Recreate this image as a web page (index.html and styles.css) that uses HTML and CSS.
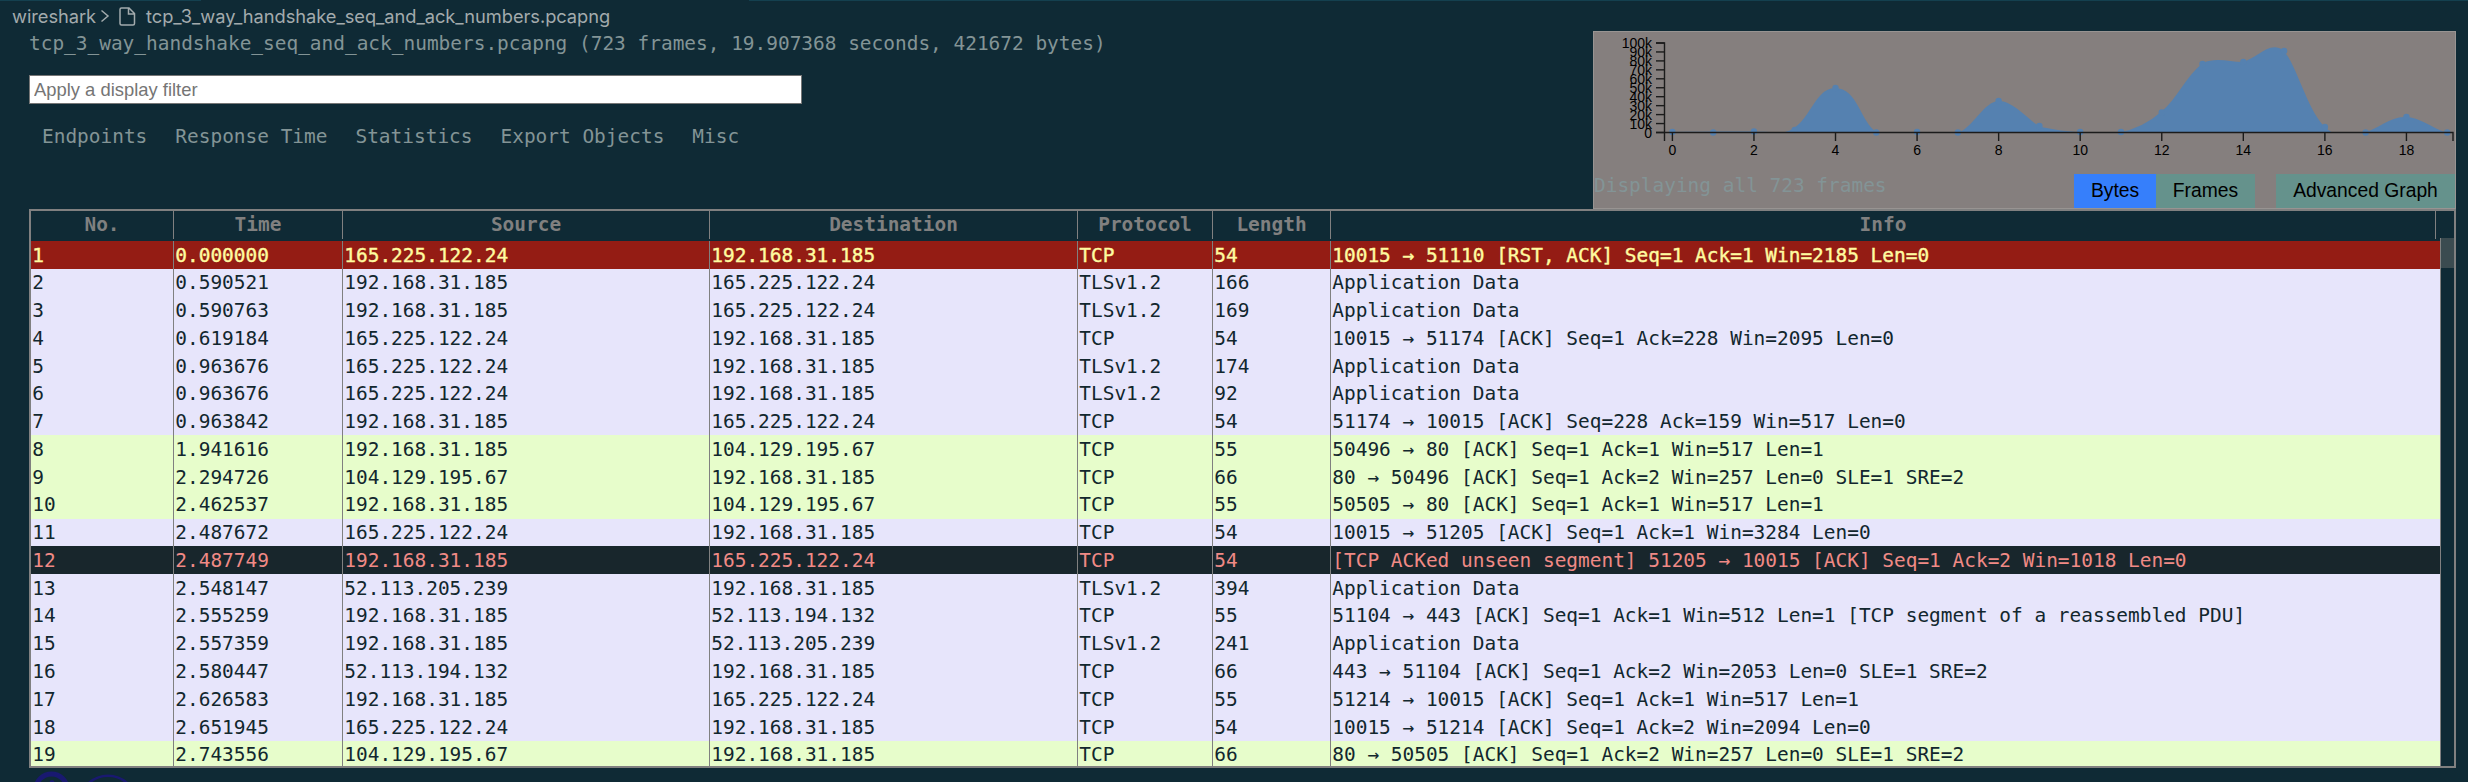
FILE: index.html
```html
<!DOCTYPE html>
<html lang="en">
<head>
<meta charset="utf-8">
<title>tcp_3_way_handshake_seq_and_ack_numbers.pcapng</title>
<link rel="stylesheet" href="styles.css">
</head>
<body>
<div class="topline"></div>
<nav class="crumbs"><span class="folder">wireshark</span>
<svg class="chev" width="10" height="14" viewBox="0 0 10 14"><path d="M1.500 1.500L8 7l-6.500 5.500"/></svg>
<svg class="file" width="17" height="19" viewBox="0 0 17 19"><path d="M2.500 1h7.500l5.500 5.500v10q0 1.500-1.500 1.500h-11.500q-1.500 0-1.500-1.500V2.500q0-1.500 1.500-1.500zM9.500 1v6h6"/></svg>
<span>tcp_3_way_handshake_seq_and_ack_numbers.pcapng</span></nav>
<main class="viewer">
<header class="head">
<section class="controls">
<div class="summary">tcp_3_way_handshake_seq_and_ack_numbers.pcapng (723 frames, 19.907368 seconds, 421672 bytes)</div>
<input class="filter" type="text" placeholder="Apply a display filter">
<div class="menu"><span>Endpoints</span><span>Response Time</span><span>Statistics</span><span>Export Objects</span><span>Misc</span></div>
</section>
<section class="graph">
<svg class="plot" width="861" height="142" viewBox="1594 32 861 142" id="plot"></svg>
<div class="graphbar"><span class="count">Displaying all 723 frames</span><button class="btn bytes">Bytes</button><button class="btn frames">Frames</button><button class="btn adv">Advanced Graph</button></div>
</section>
</header>
<section class="table">
<div class="row th"><span>No.</span><span>Time</span><span>Source</span><span>Destination</span><span>Protocol</span><span>Length</span><span>Info</span></div>
<div class="scroll"><div class="rows" id="rows"></div><div class="bar"><div class="thumb"></div></div></div>
</section>
<svg class="below" width="160" height="14" viewBox="29 768 160 14"><circle cx="51.500" cy="789.700" r="15.700" stroke-width="5"/><circle cx="108" cy="804.500" r="28.700" stroke-width="2.600"/><path d="M50 782l2-1 2 1" stroke-width="2"/></svg>
</main>
<script src="app.js"></script>
</body>
</html>
```
FILE: styles.css
```css
* { box-sizing: border-box; }
body {
  margin: 0;
  width: 2468px;
  height: 782px;
  overflow: hidden;
  background: #0f2a35;
  color: #839496;
  font: 19.44px/27.77px "DejaVu Sans Mono", monospace;
}
.topline { height: 1px; background: linear-gradient(90deg, #14404f 201px, #0f2a35 201px 749px, #14404f 749px); }
.crumbs {
  display: flex;
  align-items: center;
  height: 30px;
  padding-left: 12px;
  font: 18.3px/30px Inter, sans-serif;
  letter-spacing: -.05px;
  color: #a3abad;
}
.crumbs svg { fill: none; stroke: #a3abad; stroke-width: 1.5; }
.folder { width: 88px; }
.chev { margin-right: 9px; }
.file { margin-right: 10px; stroke-width: 1.8; }
.viewer { padding-left: 29px; }
.head { display: flex; justify-content: space-between; height: 178px; width: 2427px; }
.summary { height: 26px; line-height: 26px; white-space: pre; }
.filter {
  display: block;
  width: 773px;
  height: 29px;
  margin-top: 18px;
  padding: 0 4px;
  border: 1px solid #767676;
  background: #fff;
  font: 18.4px "Liberation Sans", sans-serif;
}
.filter::placeholder { color: #757575; }
.menu { display: flex; gap: 28px; padding: 19px 0 0 13px; }
.graph {
  display: flex;
  flex-direction: column;
  width: 863px;
  height: 178px;
  border: 1px solid #989492;
  background: #857f7e;
}
.plot { flex: none; }
.plot .area, .plot circle { fill: #5581b0; }
.plot .axis { fill: none; stroke: #1b1b1b; stroke-width: 1.4; }
.plot text { font: 14px "Liberation Sans", sans-serif; fill: #000; }
.graphbar { display: flex; height: 34px; }
.count { flex: 1; line-height: 24px; color: #839496; }
.btn {
  height: 34px;
  padding: 0;
  border: 0;
  background: #65928c;
  color: #000;
  font: 19.3px "Liberation Sans", sans-serif;
}
.bytes { width: 82px; background: #367ffb; }
.frames { width: 99px; }
.adv { width: 179px; margin-left: 21px; }
.table {
  width: 2427px;
  height: 559px;
  border: 2px solid #808080;
  overflow: hidden;
}
.row { display: grid; grid-template-columns: 143px 169px 367px 368px 135px 118px 1fr; white-space: pre; }
.row span { border-right: 1px solid #808080; padding: .5px 0 0 1.3px; }
.th { width: 2405px; height: 27px; font-weight: bold; color: #808080; text-align: center; }
.th span { padding: 0; }
.scroll { display: flex; height: 528px; }
.rows { flex: none; width: 2409px; padding-top: 3px; }
.rows .row { height: 27.77px; background: #e7e5fb; color: #12272e; }
.rows .row span:last-child { border-right: 0; }
.rows .green { background: #e7fdcb; }
.rows .red { background: #941c14; color: #fffba0; -webkit-text-stroke: .4px; }
.rows .dark { background: #18262c; color: #f08a86; }
.bar { width: 14px; border-left: 1px solid #808080; }
.thumb { height: 30px; background: #3b4b50; }
.below { display: block; fill: none; stroke: #191970; }
```
FILE: app.js
```js
const A = '192.168.31.185', B = '165.225.122.24', C = '104.129.195.67', D = '52.113.205.239', E = '52.113.194.132';
const data = [
  ['0.000000', B, A, 'TCP', 54, '10015 → 51110 [RST, ACK] Seq=1 Ack=1 Win=2185 Len=0', 'red'],
  ['0.590521', A, B, 'TLSv1.2', 166, 'Application Data'],
  ['0.590763', A, B, 'TLSv1.2', 169, 'Application Data'],
  ['0.619184', B, A, 'TCP', 54, '10015 → 51174 [ACK] Seq=1 Ack=228 Win=2095 Len=0'],
  ['0.963676', B, A, 'TLSv1.2', 174, 'Application Data'],
  ['0.963676', B, A, 'TLSv1.2', 92, 'Application Data'],
  ['0.963842', A, B, 'TCP', 54, '51174 → 10015 [ACK] Seq=228 Ack=159 Win=517 Len=0'],
  ['1.941616', A, C, 'TCP', 55, '50496 → 80 [ACK] Seq=1 Ack=1 Win=517 Len=1', 'green'],
  ['2.294726', C, A, 'TCP', 66, '80 → 50496 [ACK] Seq=1 Ack=2 Win=257 Len=0 SLE=1 SRE=2', 'green'],
  ['2.462537', A, C, 'TCP', 55, '50505 → 80 [ACK] Seq=1 Ack=1 Win=517 Len=1', 'green'],
  ['2.487672', B, A, 'TCP', 54, '10015 → 51205 [ACK] Seq=1 Ack=1 Win=3284 Len=0'],
  ['2.487749', A, B, 'TCP', 54, '[TCP ACKed unseen segment] 51205 → 10015 [ACK] Seq=1 Ack=2 Win=1018 Len=0', 'dark'],
  ['2.548147', D, A, 'TLSv1.2', 394, 'Application Data'],
  ['2.555259', A, E, 'TCP', 55, '51104 → 443 [ACK] Seq=1 Ack=1 Win=512 Len=1 [TCP segment of a reassembled PDU]'],
  ['2.557359', A, D, 'TLSv1.2', 241, 'Application Data'],
  ['2.580447', E, A, 'TCP', 66, '443 → 51104 [ACK] Seq=1 Ack=2 Win=2053 Len=0 SLE=1 SRE=2'],
  ['2.626583', A, B, 'TCP', 55, '51214 → 10015 [ACK] Seq=1 Ack=1 Win=517 Len=1'],
  ['2.651945', B, A, 'TCP', 54, '10015 → 51214 [ACK] Seq=1 Ack=2 Win=2094 Len=0'],
  ['2.743556', C, A, 'TCP', 66, '80 → 50505 [ACK] Seq=1 Ack=2 Win=257 Len=0 SLE=1 SRE=2', 'green']
];
document.getElementById('rows').innerHTML = data.map((r, i) =>
  `<div class="row ${r[6] || ''}">${[i + 1, ...r.slice(0, 6)].map(v => `<span>${v}</span>`).join('')}</div>`).join('');

// Plot: x runs 0..19 seconds, y runs 0..100k bytes
const ys = [132, 132.5, 131.5, 130, 88, 132.5, 132, 132.5, 101, 126, 132, 132, 112.5, 64, 62, 51, 127, 132.5, 117, 132.5];
const X = i => 1672.4 + i * 40.78;
let s = '<path class="area" d="M1672.500 132C1712 131.500 1754 131 1780 132.500C1809 132 1812 88 1835 88C1858 88 1860 122 1877 132.500H1958C1972 129 1984 101 1999 101C2014 101 2030 122 2041 127Q2060 131 2082 132.500H2119Q2143 128 2161 112C2177 99 2186 76 2203 63C2215 57 2231 62 2242 62C2255 60 2266 44 2279 48C2294 52 2306 112 2327 129L2332 132.500H2364C2378 129 2391 116 2406 117C2419 117 2432 128 2446 132.500Z"/>';
ys.forEach((y, i) => { s += `<circle cx="${X(i)}" cy="${y}" r="3.2"/>`; });
s += '<path class="axis" d="M1656 43h8.500v89.500h-8.500M1664.500 141v-8.500H2453v8.500"/>';
for (let i = 0; i <= 10; i++) {
  const y = 132.5 - i * 8.95;
  s += `<path class="axis" d="M1656 ${y}h8.500"/><text x="1652" y="${y + 5}" text-anchor="end">${i ? i * 10 + 'k' : 0}</text>`;
}
for (let i = 0; i <= 18; i += 2)
  s += `<path class="axis" d="M${X(i)} 132.500v8.500"/><text x="${X(i)}" y="155" text-anchor="middle">${i}</text>`;
document.getElementById('plot').innerHTML = s;
```
